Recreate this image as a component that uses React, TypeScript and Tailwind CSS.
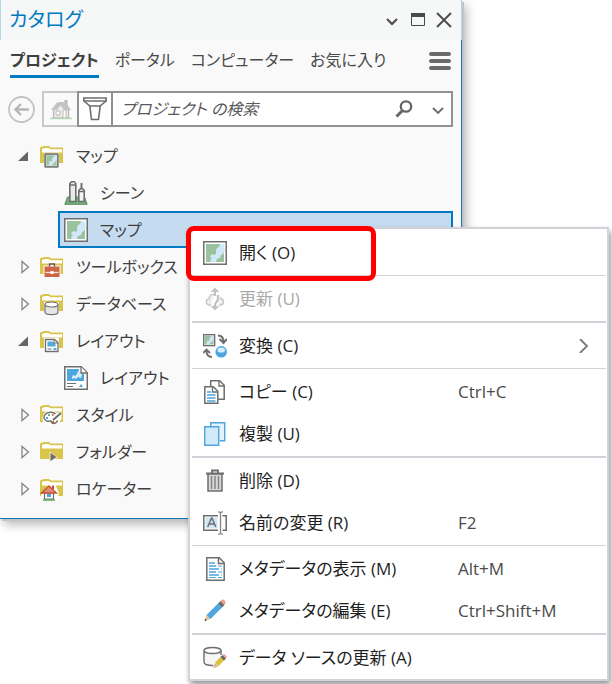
import { useState } from "react";
import type { ReactNode } from "react";

/* ---------- Small drawings ---------- */

function Svg({ children, size = 24 }: { children: ReactNode; size?: number }) {
  return (
    <svg
      width={size}
      height={size}
      viewBox={`0 0 ${size} ${size}`}
      fill="none"
      aria-hidden="true"
      className="shrink-0"
    >
      {children}
    </svg>
  );
}

function MapArt() {
  return (
    <>
      <path d="M.75.75h22.5v22.5H.75z" fill="#fff" stroke="#6e6e6e" strokeWidth="1.5" />
      <path d="M3 3h18v18H3z" fill="#9bc29e" />
      <path
        d="M21 3h-4l-1 3-2 1-1 2v4l-2 1-1-1-2 1-1 2 2 1-2 2 1 2h5l1-3 3-1 1-3 2-1 1-2h1z"
        fill="#d0e8f8"
      />
    </>
  );
}

function FolderArt() {
  return (
    <>
      <path d="M0 3.500 4 2h5l2 1.500h12V19H0z" fill="#d9c54c" />
      <path d="M2 8.500V5l3-1h3.500l2 1.200H22v3.300z" fill="#fff" />
    </>
  );
}

const icons: Record<string, ReactNode> = {
  map: <MapArt />,
  scene: (
    <>
      <path d="M3.500 16h17l2.700 7.300H.8z" fill="#75b07a" stroke="#5b8f60" />
      <path d="M5.800 20.500V2.500L7.500.8h2.600l1.700 1.700v18z" fill="#e9e9e9" stroke="#6e6e6e" strokeWidth="1.600" />
      <path d="M6 4h5.500" stroke="#6e6e6e" strokeWidth="1.500" />
      <path d="M14.800 20.500V9.500l1.500-1.700h2.400l1.500 1.700v11z" fill="#f4f4f4" stroke="#6e6e6e" strokeWidth="1.600" />
      <path d="M17.500 2v6" stroke="#6e6e6e" strokeWidth="2" />
      <path d="M15 10.500h5" stroke="#6e6e6e" strokeWidth="1.500" />
    </>
  ),
  folderMap: (
    <>
      <FolderArt />
      <path d="M4 9h15v15H4z" fill="#fff" />
      <g transform="translate(4.500 9.500) scale(.58)">
        <MapArt />
      </g>
      <path d="M5.200 10.200h12.600v12.600H5.200z" stroke="#6e6e6e" strokeWidth="1.200" />
    </>
  ),
  folderToolbox: (
    <>
      <FolderArt />
      <path d="M3.500 10.500h5V8h7v2.500h5V23h-17z" fill="#fff" />
      <path d="M9.500 11.500V9h5v2.500" stroke="#6e4a42" strokeWidth="1.500" />
      <path d="M4.500 11.500h15V22h-15z" fill="#cb6647" />
      <path d="M5.500 17.500h13" stroke="#f7ded6" strokeWidth="1.300" />
      <path d="M10.500 16h3v3h-3z" fill="#fff" />
    </>
  ),
  folderDatabase: (
    <>
      <FolderArt />
      <path d="M4 10h15v12l-4 2H8l-4-2z" fill="#fff" />
      <path d="M5 12.500v7.500c0 3.500 13 3.500 13 0v-7.500" fill="#e4e4e4" stroke="#6e6e6e" strokeWidth="1.200" />
      <ellipse cx="11.500" cy="12.500" rx="6.500" ry="2.500" fill="#fff" stroke="#6e6e6e" strokeWidth="1.200" />
    </>
  ),
  folderLayout: (
    <>
      <FolderArt />
      <path d="M4 9h15v15H4z" fill="#fff" />
      <path d="M5.500 10.500h9l3.500 3V22.500H5.500z" fill="#fff" stroke="#6e6e6e" strokeWidth="1.300" />
      <path d="M7.500 12.500h5l3 2.500v2.500h-8z" fill="#55a8de" />
      <path d="M14 10v4h4M7.500 20h4" stroke="#6e6e6e" />
      <path d="M13.500 19h3v2h-3z" fill="#55a8de" />
    </>
  ),
  layout: (
    <>
      <path d="M.75.75h16.500l6 6v16.500H.75z" fill="#fff" stroke="#6e6e6e" strokeWidth="1.500" />
      <path d="M3 3h12v4.500h5V15H3z" fill="#4fa5de" />
      <path d="m8 11 1-2 2 1 2-2 1-3 3 1 1 3-1 3-3-1-2 2-2-1-2 1z" fill="#d6ebf8" />
      <path d="M17 1v6h6" fill="#fff" stroke="#6e6e6e" strokeWidth="1.300" />
      <path d="M3 17.500h9M3 20.500h6" stroke="#6e6e6e" strokeWidth="1.200" />
      <path d="m15 21 2-3 2 3z" fill="#4fa5de" />
    </>
  ),
  folderStyle: (
    <>
      <FolderArt />
      <path d="M2.500 15c0-8 12-9 14-5l5-1v7l-4 6h-8c-5 0-7-3-7-7z" fill="#fff" />
      <path
        d="M15.500 11c-4-3.500-11-1-11.500 3-.5 3 3 5 6 4 2-.5 1 2.500 3.500 2.500 2 0 3.500-1.500 4-3"
        stroke="#6e6e6e"
        strokeWidth="1.400"
      />
      <path d="m21 10-8 7" stroke="#6e6e6e" strokeWidth="2" />
      <path d="m11 20 2-2.500 1.500 1.500-1 2z" fill="#a5663a" />
      <path d="M6 14h2v2H6z" fill="#4fa5de" />
      <path d="M8 11h2v2H8z" fill="#75b07a" />
      <path d="M12 11h1.500v2H12z" fill="#d2695b" />
    </>
  ),
  folderLink: (
    <>
      <FolderArt />
      <path d="M9.500 11.500 18 17.500l-8.500 4z" fill="#f3ecc4" />
      <path d="m10.500 13 6 4-6 4z" fill="#6e6e6e" />
    </>
  ),
  folderLocator: (
    <>
      <FolderArt />
      <path d="M1 18 9 7h6l4 9-2 8H3z" fill="#fff" />
      <path d="M4.500 16h9v6h-9z" fill="#fff" stroke="#6e6e6e" strokeWidth="1.200" />
      <path d="m1.500 16 7.500-7 7.500 7z" fill="#dd8e76" stroke="#c8502f" strokeWidth="1.300" />
      <path d="M13 8.500V12" stroke="#c8502f" strokeWidth="2" />
      <path d="M7 17h4v3H7z" fill="#4fa5de" />
      <path d="M3 23h12" stroke="#58a55e" strokeWidth="1.500" />
    </>
  ),
  refresh: (
    <>
      <path
        d="M8 18H6c-4-1-3-6 0-6 0-3 2-5 5-4.500M17 11c4 1 5 6 1 7h-2"
        fill="#eee"
        stroke="#c6c6c6"
        strokeWidth="1.400"
      />
      <path d="M11 9V5H7.500L12 .5 16.500 5H13v4" fill="#c2c2c2" />
      <path d="M15 8v4c0 3-3 3-3 6v3" stroke="#c2c2c2" strokeWidth="2.400" />
      <path d="M7.500 19h9L12 23.500z" fill="#c2c2c2" />
    </>
  ),
  convert: (
    <>
      <g transform="scale(.5)">
        <MapArt />
      </g>
      <path d="M.6.600h11v11H.6z" stroke="#6e6e6e" strokeWidth="1.300" />
      <path
        d="M15 1.500c4 0 5.500 2 5.500 6.500M16.500 5l4 4 3.500-4M9 23c-4 0-5.500-2-5.500-6M0 19l3.500-3.500L7 19"
        stroke="#6e6e6e"
        strokeWidth="1.900"
      />
      <circle cx="18.200" cy="17.800" r="5.800" fill="#4fa5de" />
      <ellipse cx="18.200" cy="16" rx="3.800" ry="2.600" fill="#d7edfa" />
    </>
  ),
  copy: (
    <>
      <path d="M7.700 6V.8h9l4.500 4.500v14H15" fill="#fff" stroke="#6e6e6e" strokeWidth="1.500" />
      <path d="M16 1v5h5" stroke="#6e6e6e" strokeWidth="1.300" />
      <path d="M1.800 6.800h8.500l4.500 4.500v11.900h-13z" fill="#fff" stroke="#6e6e6e" strokeWidth="1.500" />
      <path d="M9.500 7v5h5" stroke="#6e6e6e" strokeWidth="1.300" />
      <path d="M4 12h4M4 15h8.500M4 18h8.500M4 21h8.500" stroke="#4fa5de" strokeWidth="1.300" />
    </>
  ),
  duplicate: (
    <>
      <path d="M7.700 5V.7h14v18.100h-5" fill="#e3f2fb" stroke="#4fa5de" strokeWidth="1.400" />
      <path d="M1.700 4.700h14v18.600h-14z" fill="#d2e9f8" stroke="#4fa5de" strokeWidth="1.400" />
    </>
  ),
  trash: (
    <>
      <path d="M3 4.500h18M9 4V1.500h6V4" stroke="#6e6e6e" strokeWidth="1.800" />
      <path d="M5 5h14v17H5z" fill="#d8d8d8" stroke="#6e6e6e" strokeWidth="1.500" />
      <path d="M8.500 7v13M12 7v13M15.500 7v13" stroke="#858585" strokeWidth="1.500" />
    </>
  ),
  rename: (
    <>
      <path d="M15 4.800H.8v14.400H15M19.500 4.800h3.700v14.400h-3.700" stroke="#6e6e6e" strokeWidth="1.500" />
      <path d="M2.500 6.500h12v11h-12z" fill="#cfe6f6" />
      <path d="m4.700 16 3.800-9h.5l3.800 9M6 13h5.500" stroke="#6e6e6e" strokeWidth="1.500" />
      <path
        d="M15 .8c1.500 0 2.500.5 2.500 1.500v19.400c0 1-1 1.500-2.500 1.500M20 .8c-1.500 0-2.500.5-2.500 1.500M20 23.200c-1.500 0-2.500-.5-2.500-1.500"
        stroke="#858585"
        strokeWidth="1.300"
      />
    </>
  ),
  metadata: (
    <>
      <path d="M3.800.8h12.400l5 5v17.400H3.800z" fill="#fff" stroke="#6e6e6e" strokeWidth="1.500" />
      <path d="M15.500 1v5.500H21" stroke="#6e6e6e" strokeWidth="1.500" />
      <path d="M6 6h6M6 9h7M6 12h10M6 15h7M6 18h10" stroke="#4fa5de" strokeWidth="1.400" />
      <path d="M15 9h4M18 12h1M15 15h4M18 18h1M6 20.500h7M15 20.500h4" stroke="#4fa5de" strokeWidth="1.200" />
    </>
  ),
  pencil: (
    <>
      <path d="m1.500 21.500 2-5.500 4 4-5.500 2z" fill="#e8c49a" />
      <path d="m1.500 22 .8-2.500 1.700 1.700z" fill="#555" />
      <path d="M3.500 16 15 4.500l4 4L7.500 20z" fill="#4fa5de" />
      <path d="m15 4.500 2.500-2.500 4 4L19 8.500z" fill="#6b6b6b" />
      <path d="m17.500 2 1-1c2-1.500 5 1.500 3.800 3.500l-1 1.300z" fill="#eea08e" />
    </>
  ),
  source: (
    <>
      <path d="M1 5v11c0 2.500 5 4 9 3.500l8-9V5z" fill="#f7f7f7" />
      <ellipse cx="9.500" cy="4.500" rx="8.500" ry="3" fill="#fff" stroke="#6e6e6e" strokeWidth="1.400" />
      <path d="M1 5v11c0 2.500 4 3.500 9 3.500M18 5v4" stroke="#6e6e6e" strokeWidth="1.400" />
      <path d="m10 21 2-4 3 3.500-4.500 1.500z" fill="#d9b58b" />
      <path d="m12 16.500 6-6 3.500 3.500-6.500 6.500z" fill="#d9c33e" />
      <path d="m17.500 11 2-2 3.500 3.500-2 2z" fill="#666" />
      <path d="m19.500 8.800 1.500-1 3 3-1 1.600z" fill="#eea08e" />
    </>
  ),
};

/* ---------- Catalog panel ---------- */

const tabs = ["プロジェクト", "ポータル", "コンピューター", "お気に入り"];

type TreeNode = {
  label: string;
  icon: string;
  children?: { id: string; label: string; icon: string }[];
};

const tree: TreeNode[] = [
  {
    label: "マップ",
    icon: "folderMap",
    children: [
      { id: "scene", label: "シーン", icon: "scene" },
      { id: "map", label: "マップ", icon: "map" },
    ],
  },
  { label: "ツールボックス", icon: "folderToolbox" },
  { label: "データベース", icon: "folderDatabase" },
  {
    label: "レイアウト",
    icon: "folderLayout",
    children: [{ id: "layout", label: "レイアウト", icon: "layout" }],
  },
  { label: "スタイル", icon: "folderStyle" },
  { label: "フォルダー", icon: "folderLink" },
  { label: "ロケーター", icon: "folderLocator" },
];

function TitleBar() {
  return (
    <header className="flex h-10 items-center border-x border-[#b5d5e8] bg-[#f6f8f8] pr-2 pl-2">
      <h1 className="flex-1 text-xl text-[#007ac2]">カタログ</h1>
      <div className="flex items-center gap-2 text-[#4a4a4a]">
        <button aria-label="オプション">
          <Svg size={18}>
            <path d="m4 8 5 5 5-5" stroke="currentColor" strokeWidth="2" />
          </Svg>
        </button>
        <button aria-label="最大化">
          <Svg size={18}>
            <path d="M2.500 3.500h13v11h-13z" stroke="currentColor" />
            <path d="M2 2h14v4H2z" fill="currentColor" />
          </Svg>
        </button>
        <button aria-label="閉じる">
          <Svg size={18}>
            <path d="m2 2 14 14M16 2 2 16" stroke="currentColor" strokeWidth="1.800" />
          </Svg>
        </button>
      </div>
    </header>
  );
}

function Tabs() {
  const [active, setActive] = useState(0);
  return (
    <nav className="flex items-start pt-1 pr-2.5 pl-2.5">
      <div role="tablist" className="flex flex-1 gap-4">
        {tabs.map((tab, i) => (
          <button
            key={tab}
            role="tab"
            aria-selected={i === active}
            onClick={() => setActive(i)}
            className={`h-[34px] border-b-3 text-base whitespace-nowrap ${
              i === active
                ? "border-[#007ac2] font-bold text-[#3f3f3f]"
                : "border-transparent text-[#4a4a4a]"
            }`}
          >
            {tab}
          </button>
        ))}
      </div>
      <button aria-label="メニュー" className="mt-1.5 text-[#6a6a6a]">
        <Svg size={22}>
          <path d="M2 4h18M2 11h18M2 18h18" stroke="currentColor" strokeWidth="4" strokeLinecap="round" />
        </Svg>
      </button>
    </nav>
  );
}

function SearchBar() {
  return (
    <div className="mt-[13px] mr-2 ml-2 flex items-center">
      <button aria-label="戻る" className="mr-[7px]">
        <Svg size={27}>
          <circle cx="13.500" cy="13.500" r="12.500" stroke="#c3c3c3" strokeWidth="1.800" />
          <path d="M21 13.500H8M13 8l-5.500 5.500L13 19" stroke="#b5b5b5" strokeWidth="2.400" />
        </Svg>
      </button>
      <button
        aria-label="ホーム"
        className="flex h-9 w-[35px] items-center justify-center border-2 border-r-0 border-[#c8c8c8] bg-[#fafafa]"
      >
        <Svg size={22}>
          <path d="M3.500 11v9h15v-9L13 5H9z" fill="#eee" stroke="#b5b5b5" strokeWidth="1.300" />
          <path d="M16 2v5" stroke="#b5b5b5" strokeWidth="3" />
          <path d="m1 12 6-7.500h9L21 12h-7l-3.500-4.500L7 12z" fill="#c3c3c3" />
          <path d="M6 13h4v4H6z" fill="#fff" stroke="#b5b5b5" />
          <path d="M13 12h3v8h-3z" fill="#fff" stroke="#c9b5ac" />
          <path d="M0 20.500h22" stroke="#b4dab6" strokeWidth="1.500" />
        </Svg>
      </button>
      <button
        aria-label="フィルター"
        className="flex h-9 w-9 items-center justify-center border-2 border-[#919191] bg-white"
      >
        <Svg>
          <path
            d="M.8 1h22.400v3l-6 5-1.700 13.500h-7L6.800 9 .8 4z"
            fill="#fff"
            stroke="#6e6e6e"
            strokeWidth="1.600"
          />
          <path d="M1 4h22M6.500 9h11" stroke="#6e6e6e" strokeWidth="1.500" />
        </Svg>
      </button>
      <div className="flex h-9 min-w-0 flex-1 items-center border-2 border-l-0 border-[#919191] bg-white pr-1 pl-2">
        <input
          type="search"
          aria-label="プロジェクト の検索"
          placeholder="プロジェクト の検索"
          className="min-w-0 flex-1 text-base italic outline-none placeholder:text-[#5a5a5a]"
        />
        <button aria-label="検索" className="mr-4">
          <Svg size={18}>
            <circle cx="11" cy="6.500" r="5.200" stroke="#666" strokeWidth="2.300" />
            <path d="m7.500 10.500-6 6" stroke="#666" strokeWidth="3" />
          </Svg>
        </button>
        <button aria-label="検索オプション">
          <Svg size={18}>
            <path d="m4 8 5 5 5-5" stroke="#6a6a6a" strokeWidth="1.800" />
          </Svg>
        </button>
      </div>
    </div>
  );
}

function Branch({ node }: { node: TreeNode }) {
  const [open, setOpen] = useState(Boolean(node.children));
  return (
    <li role="treeitem" aria-expanded={open}>
      <div className="flex h-[37px] items-center pl-4">
        <button
          aria-label={`${node.label}を${open ? "閉じる" : "開く"}`}
          onClick={() => setOpen(!open)}
          className="w-6 pl-0.5"
        >
          <Svg size={14}>
            {open ? (
              <path d="M10 2.500V12H0z" fill="#666" />
            ) : (
              <path d="M4 1.500v11L10.500 7z" stroke="#858585" strokeWidth="1.300" />
            )}
          </Svg>
        </button>
        <Svg>{icons[node.icon]}</Svg>
        <span className="ml-3">{node.label}</span>
      </div>
      {open && node.children && (
        <ul role="group">
          {node.children.map((child) => (
            <li
              key={child.id}
              role="treeitem"
              aria-selected={child.id === "map"}
              className={`mr-2 ml-[58px] flex h-[37px] items-center border-2 pl-1 ${
                child.id === "map" ? "border-[#007ac2] bg-[#c5dbef]" : "border-transparent"
              }`}
            >
              <Svg>{icons[child.icon]}</Svg>
              <span className="ml-3">{child.label}</span>
            </li>
          ))}
        </ul>
      )}
    </li>
  );
}

/* ---------- Context menu ---------- */

type MenuEntry = {
  label: string;
  icon: string;
  shortcut?: string;
  disabled?: boolean;
  submenu?: boolean;
  highlighted?: boolean;
  divider?: "thin" | "thick";
};

const menu: MenuEntry[] = [
  { label: "開く (O)", icon: "map", highlighted: true, divider: "thin" },
  { label: "更新 (U)", icon: "refresh", disabled: true, divider: "thick" },
  { label: "変換 (C)", icon: "convert", submenu: true, divider: "thin" },
  { label: "コピー (C)", icon: "copy", shortcut: "Ctrl+C" },
  { label: "複製 (U)", icon: "duplicate", divider: "thick" },
  { label: "削除 (D)", icon: "trash" },
  { label: "名前の変更 (R)", icon: "rename", shortcut: "F2", divider: "thin" },
  { label: "メタデータの表示 (M)", icon: "metadata", shortcut: "Alt+M" },
  { label: "メタデータの編集 (E)", icon: "pencil", shortcut: "Ctrl+Shift+M", divider: "thick" },
  { label: "データ ソースの更新 (A)", icon: "source" },
];

function ContextMenu() {
  return (
    <ul
      role="menu"
      className="absolute top-[227px] right-[3px] left-[188px] border-2 border-[#d2d3d8] bg-white pt-[3px] shadow-[2px_4px_6px_rgba(0,0,0,0.4)]"
    >
      {menu.map((item) => (
        <li key={item.label} role="none" className="relative">
          <button
            role="menuitem"
            disabled={item.disabled}
            className="flex h-[42px] w-full items-center pr-4 pl-[13px] text-left text-[17px] text-[#1f1f1f] disabled:text-[#a9a9a9]"
          >
            <Svg>{icons[item.icon]}</Svg>
            <span className="ml-3 flex-1 whitespace-nowrap">{item.label}</span>
            {item.shortcut && <span className="w-[133px] whitespace-nowrap text-[#4a4a4a]">{item.shortcut}</span>}
            {item.submenu && (
              <Svg size={14}>
                <path d="m3 0 7 7-7 7" stroke="#777" strokeWidth="1.800" />
              </Svg>
            )}
          </button>
          {item.divider && (
            <div
              role="separator"
              className={`mt-px mr-px mb-0.5 ml-0.5 bg-[#d2d3d8] ${item.divider === "thick" ? "h-0.5" : "h-px"}`}
            />
          )}
          {item.highlighted && (
            <div className="pointer-events-none absolute -top-[6px] -left-1 h-[55px] w-[190px] rounded-lg border-5 border-[#ff0000]" />
          )}
        </li>
      ))}
    </ul>
  );
}

export default function App() {
  return (
    <main className="relative min-h-screen bg-white font-['Open_Sans','Noto_Sans_CJK_JP',sans-serif] [font-feature-settings:'palt']">
      <section className="mr-[150px] bg-[#f9f9f9] shadow-[2px_2px_0_#c3c3c9,4px_5px_10px_rgba(0,0,0,0.3)]">
        <TitleBar />
        <div className="border-r border-b border-[#0f78b4] pb-[11px]">
          <Tabs />
          <SearchBar />
          <ul role="tree" aria-label="カタログ" className="mt-2.5 text-base text-[#3f3f3f]">
            {tree.map((node) => (
              <Branch key={node.label} node={node} />
            ))}
          </ul>
        </div>
      </section>
      <ContextMenu />
    </main>
  );
}
